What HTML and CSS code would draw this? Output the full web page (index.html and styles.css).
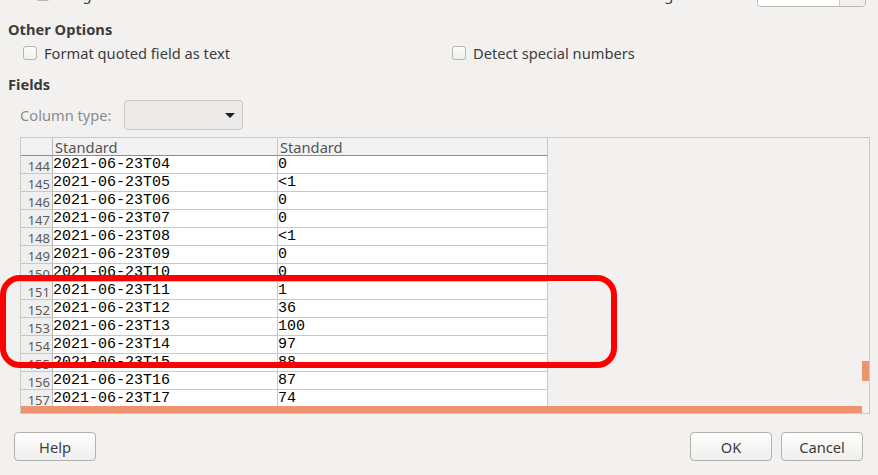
FILE: index.html
```html
<!DOCTYPE html>
<html>
<head>
<meta charset="utf-8">
<link rel="stylesheet" href="styles.css">
</head>
<body>
<div class="top">
  <div class="top-inner">
    <span class="check top-item"></span>
    <span class="label top-item">Merge delimiters</span>
    <span class="spacer"></span>
    <span class="label top-item lbl-right">String delimiter:</span>
    <span class="spin"><span class="spin-field"></span><span class="spin-btn"></span></span>
  </div>
</div>

<div class="title t-other">Other Options</div>
<div class="options">
  <label class="opt opt-1"><span class="check"></span><span class="label">Format quoted field as text</span></label>
  <label class="opt"><span class="check"></span><span class="label">Detect special numbers</span></label>
</div>

<div class="title t-fields">Fields</div>
<div class="coltype">
  <span class="label disabled ct-label">Column type:</span>
  <span class="combo"><span class="arrow"></span></span>
</div>

<div class="frame">
  <div class="sheet">
    <div class="row head">
      <div class="c num"></div>
      <div class="c c1">Standard</div>
      <div class="c c2">Standard</div>
    </div>
    <div class="row"><div class="c num">144</div><div class="c c1 d">2021-06-23T04</div><div class="c c2 d">0</div></div>
    <div class="row"><div class="c num">145</div><div class="c c1 d">2021-06-23T05</div><div class="c c2 d">&lt;1</div></div>
    <div class="row"><div class="c num">146</div><div class="c c1 d">2021-06-23T06</div><div class="c c2 d">0</div></div>
    <div class="row"><div class="c num">147</div><div class="c c1 d">2021-06-23T07</div><div class="c c2 d">0</div></div>
    <div class="row"><div class="c num">148</div><div class="c c1 d">2021-06-23T08</div><div class="c c2 d">&lt;1</div></div>
    <div class="row"><div class="c num">149</div><div class="c c1 d">2021-06-23T09</div><div class="c c2 d">0</div></div>
    <div class="row"><div class="c num">150</div><div class="c c1 d">2021-06-23T10</div><div class="c c2 d">0</div></div>
    <div class="row"><div class="c num">151</div><div class="c c1 d">2021-06-23T11</div><div class="c c2 d">1</div></div>
    <div class="row"><div class="c num">152</div><div class="c c1 d">2021-06-23T12</div><div class="c c2 d">36</div></div>
    <div class="row"><div class="c num">153</div><div class="c c1 d">2021-06-23T13</div><div class="c c2 d">100</div></div>
    <div class="row"><div class="c num">154</div><div class="c c1 d">2021-06-23T14</div><div class="c c2 d">97</div></div>
    <div class="row"><div class="c num">155</div><div class="c c1 d">2021-06-23T15</div><div class="c c2 d">88</div></div>
    <div class="row"><div class="c num">156</div><div class="c c1 d">2021-06-23T16</div><div class="c c2 d">87</div></div>
    <div class="row"><div class="c num">157</div><div class="c c1 d">2021-06-23T17</div><div class="c c2 d">74</div></div>
  </div>
  <div class="vtrack"><div class="vthumb"></div></div>
  <div class="htrack"><div class="hthumb"></div></div>
  <div class="corner"></div>
</div>

<div class="buttons">
  <button class="btn">Help</button>
  <span class="spacer"></span>
  <button class="btn">OK</button>
  <button class="btn">Cancel</button>
</div>

<div class="highlight"></div>
</body>
</html>
```

FILE: styles.css
```css
html, body {
  margin: 0;
  padding: 0;
}
body {
  width: 878px;
  height: 475px;
  overflow: hidden;
  background: #f2f1f0;
  font-family: "Noto Sans", "Open Sans", sans-serif;
  font-size: 14.67px;
  color: #3c3c3c;
  position: relative;
}

.top {
  height: 8px;
  overflow: hidden;
}
.top-inner {
  display: flex;
  align-items: center;
  height: 28px;
  margin-top: -21px;
  padding-left: 36px;
  padding-right: 12px;
}
.top-item {
  margin-top: 1px;
}
.top-inner .label {
  margin-left: 5px;
}
.spacer {
  flex: 1;
}
.lbl-right {
  margin-right: 14px;
}
.spin {
  display: flex;
  width: 109px;
  height: 28px;
  box-sizing: border-box;
  border: 1px solid #bdb8b2;
  border-radius: 4px;
  overflow: hidden;
}
.spin-field {
  flex: 1;
  background: #fff;
}
.spin-btn {
  width: 25px;
  border-left: 1px solid #cfcac5;
  background: #f0efee;
}

.check {
  display: inline-block;
  width: 14px;
  height: 14px;
  box-sizing: border-box;
  border: 1px solid #b8b4af;
  border-radius: 3px;
  background: linear-gradient(#fbfbfa, #f1f0ef);
  flex: none;
}

.title {
  font-weight: bold;
  color: #3c3c3c;
  padding-left: 8px;
  line-height: 20px;
}
.t-other {
  margin-top: 11px;
}
.options {
  display: flex;
  align-items: center;
  height: 20px;
  margin-top: 4px;
}
.opt {
  display: flex;
  align-items: center;
  gap: 7px;
}
.opt-1 {
  padding-left: 23px;
  width: 429px;
}
.t-fields {
  margin-top: 11px;
}

.coltype {
  display: flex;
  align-items: center;
  height: 30px;
  margin-top: 6px;
  padding-left: 20px;
}
.ct-label {
  width: 104px;
  white-space: nowrap;
}
.disabled {
  color: #8b8e8f;
}
.combo {
  width: 119px;
  height: 30px;
  box-sizing: border-box;
  border: 1px solid #cdc8c3;
  border-radius: 4px;
  background: #ecebea;
  display: flex;
  align-items: center;
  justify-content: flex-end;
  padding-right: 7px;
}
.arrow {
  width: 0;
  height: 0;
  border-left: 5px solid transparent;
  border-right: 5px solid transparent;
  border-top: 5px solid #1e1e1e;
}

.frame {
  margin: 7px 0 0 20px;
  width: 850px;
  height: 277px;
  box-sizing: border-box;
  border: 1px solid #cdcac6;
  display: grid;
  grid-template-columns: 1fr 7px;
  grid-template-rows: 1fr 7px;
  overflow: hidden;
}
.sheet {
  overflow: hidden;
}
.row {
  display: flex;
  height: 18px;
}
.c {
  box-sizing: border-box;
  height: 18px;
  border-right: 1px solid #c8c8c8;
  border-bottom: 1px solid #c8c8c8;
  white-space: nowrap;
  overflow: hidden;
}
.num {
  width: 32px;
  background: #efefef;
  text-align: right;
  color: #5a5a5a;
  font-size: 13px;
  line-height: 20px;
  padding-right: 2px;
  border-right-color: #b8b8b8;
}
.c1 {
  width: 225px;
  background: #fff;
}
.c2 {
  width: 270px;
  background: #fff;
}
.head .c {
  background: #f2f2f2;
  border-bottom-color: #8e8e8e;
  color: #555;
  line-height: 18px;
  padding-left: 2px;
  font-size: 14.67px;
}
.d {
  font-family: "Liberation Mono", "DejaVu Sans Mono", monospace;
  font-size: 15px;
  line-height: 17px;
  color: #000;
}
.vtrack {
  position: relative;
}
.vthumb {
  margin-top: 223px;
  height: 20px;
  background: #ee9270;
}
.htrack {
  display: flex;
}
.hthumb {
  flex: 1;
  background: #ee9270;
}

.buttons {
  display: flex;
  gap: 9px;
  margin-top: 18px;
  padding: 0 15px 0 14px;
}
.btn {
  width: 82px;
  height: 29px;
  box-sizing: border-box;
  border: 1px solid #b5b1ac;
  border-radius: 4px;
  background: linear-gradient(#fdfdfd, #f0efee);
  font-family: "Noto Sans", "Open Sans", sans-serif;
  font-size: 14.67px;
  color: #3c3c3c;
  padding: 0;
}

.highlight {
  position: absolute;
  left: 0;
  top: 275px;
  width: 617px;
  height: 93px;
  box-sizing: border-box;
  border: 6px solid #ff0000;
  border-radius: 20px;
}
```
